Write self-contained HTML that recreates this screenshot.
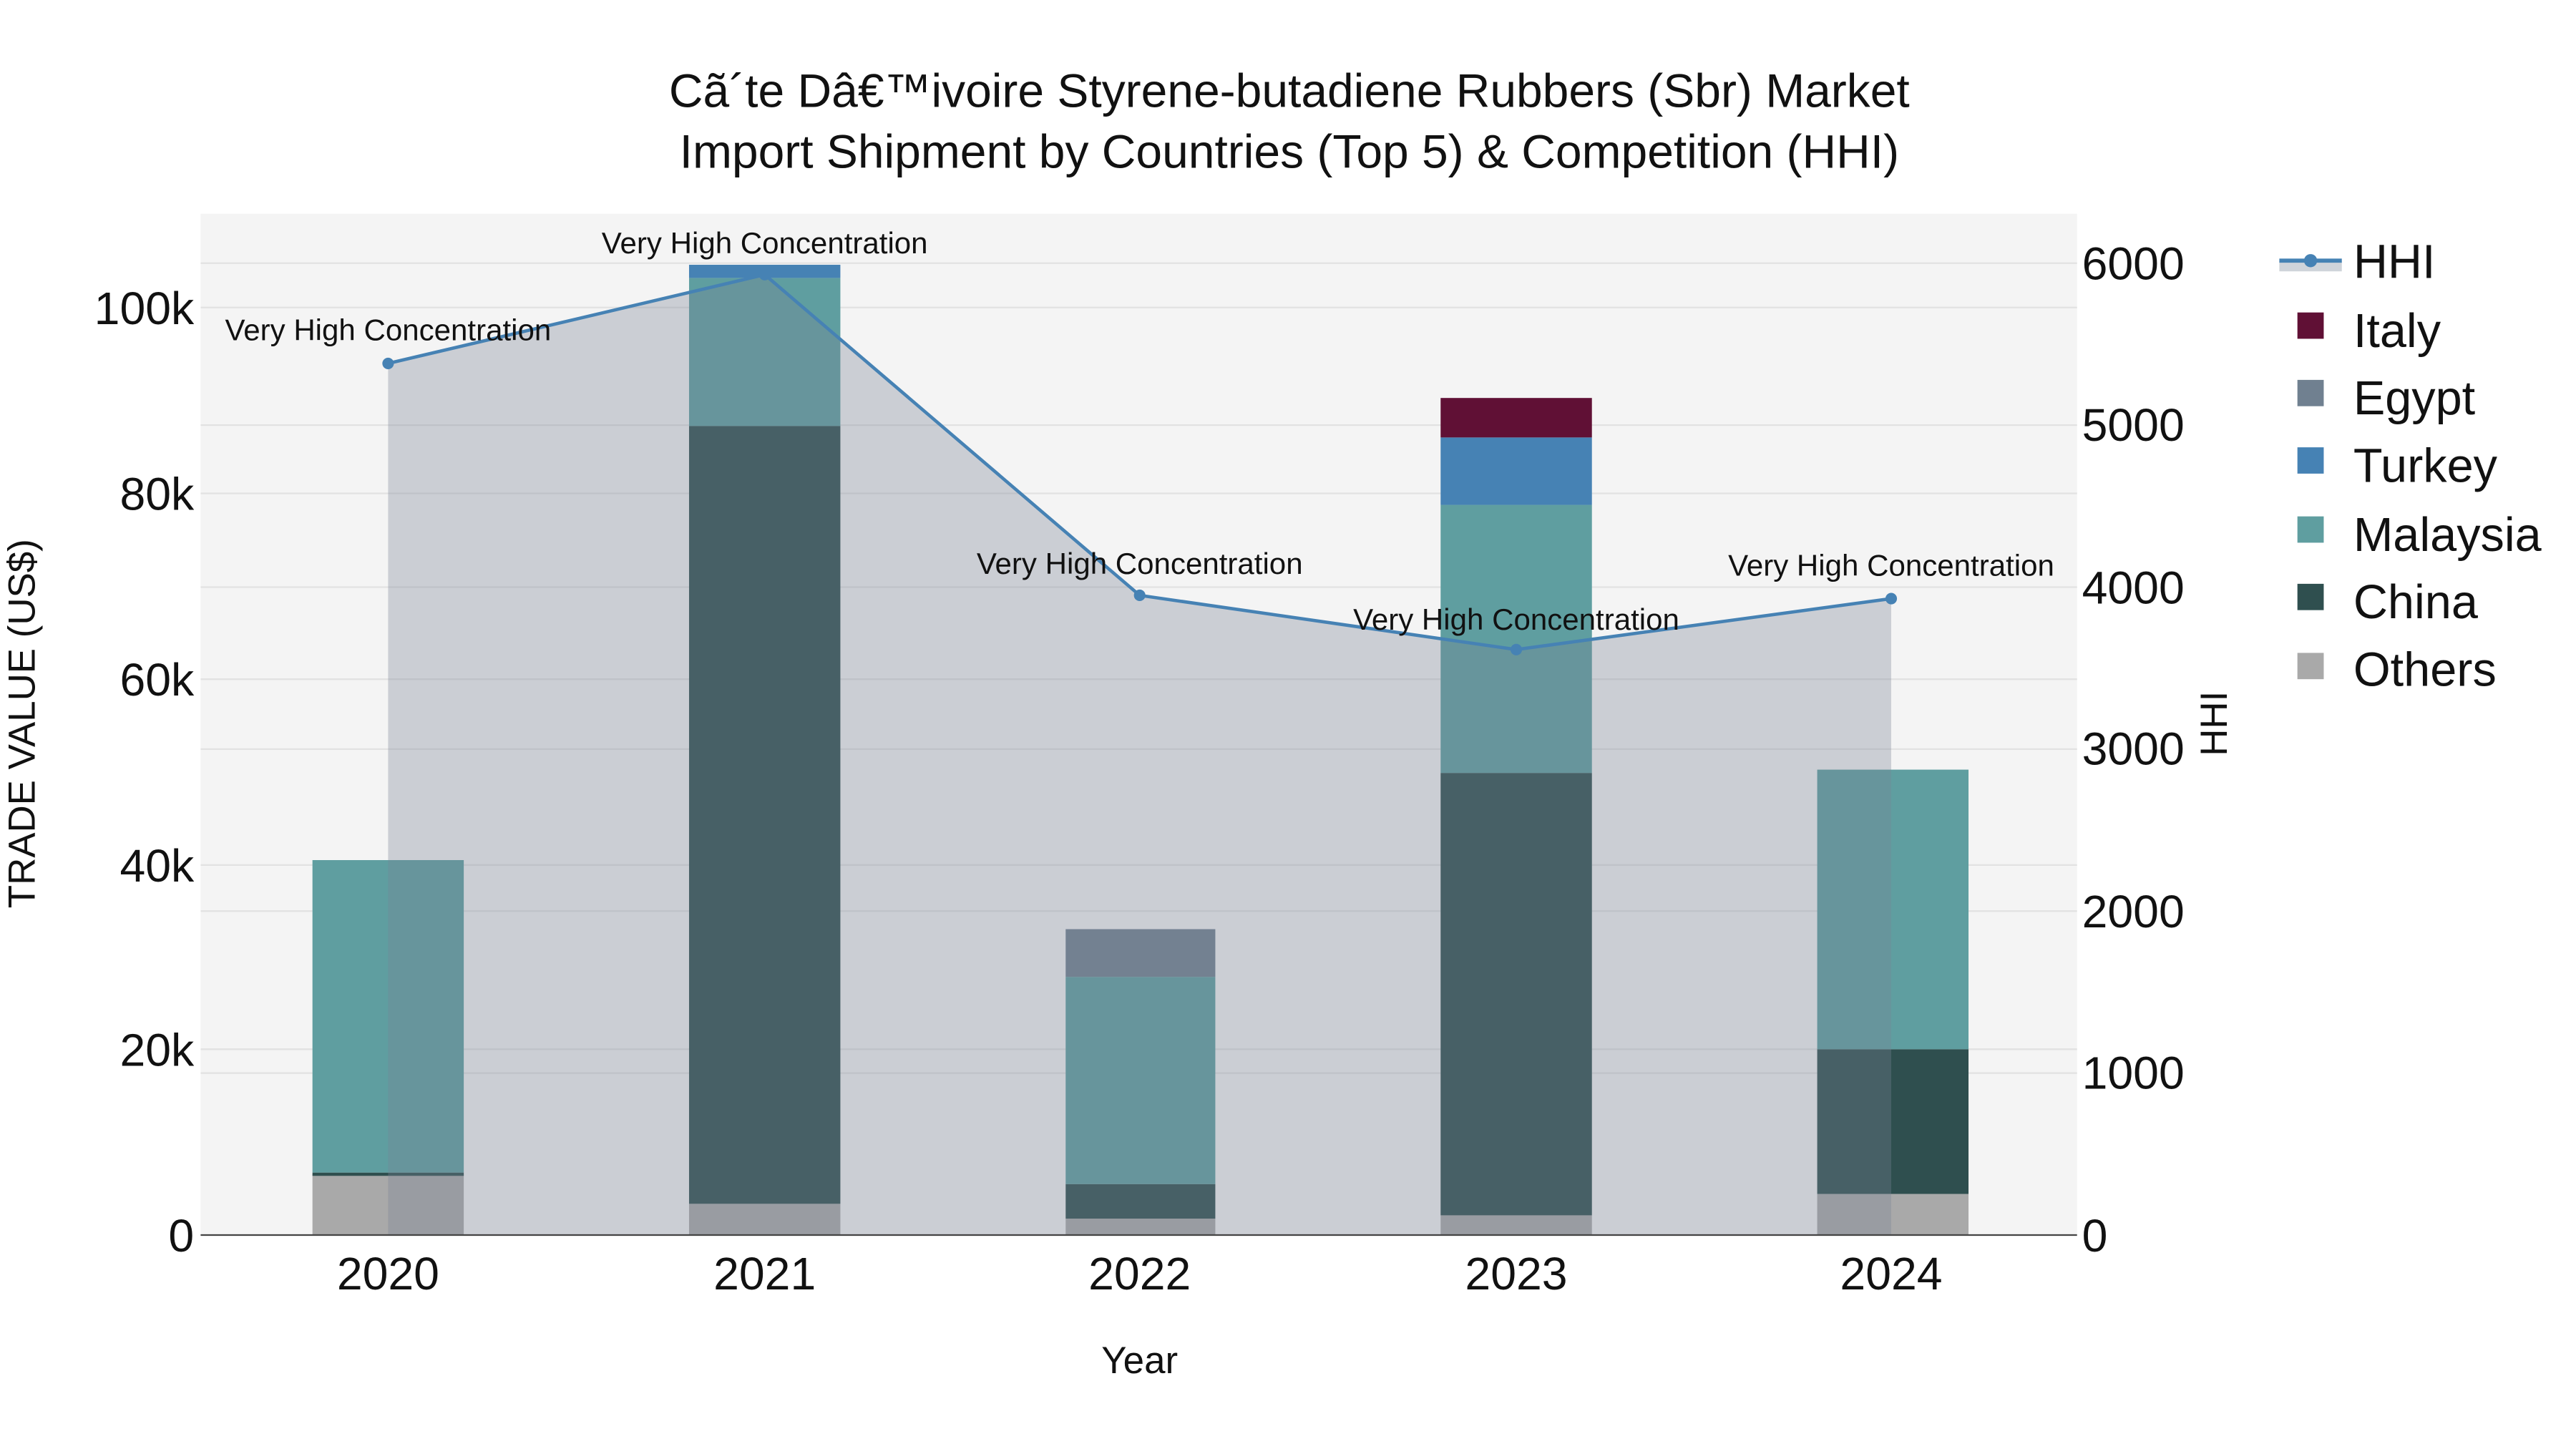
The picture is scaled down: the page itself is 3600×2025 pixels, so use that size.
<!DOCTYPE html>
<html><head><meta charset="utf-8"><style>html,body{margin:0;padding:0;background:#fff}svg{display:block}</style></head>
<body>
<svg width="3600" height="2025" viewBox="0 0 1566.4 881.1" xmlns="http://www.w3.org/2000/svg" font-family="Liberation Sans, sans-serif">
<rect x="0" y="0" width="1570" height="885" fill="#fff"/>
<rect x="122" y="130" width="1141" height="621" fill="#f4f4f4"/>
<g stroke="#e2e2e2" stroke-width="1">
<line x1="122" x2="1263" y1="638" y2="638"/><line x1="122" x2="1263" y1="526" y2="526"/><line x1="122" x2="1263" y1="413" y2="413"/><line x1="122" x2="1263" y1="300" y2="300"/><line x1="122" x2="1263" y1="187" y2="187"/>
<line x1="122" x2="1263" y1="652.5" y2="652.5"/><line x1="122" x2="1263" y1="554" y2="554"/><line x1="122" x2="1263" y1="455.5" y2="455.5"/><line x1="122" x2="1263" y1="357" y2="357"/><line x1="122" x2="1263" y1="258.5" y2="258.5"/><line x1="122" x2="1263" y1="160" y2="160"/>
</g>
<g>
<rect x="190" y="714" width="92" height="37" fill="#a9a9a9"/>
<rect x="190" y="713" width="92" height="2" fill="#2f4f4f"/>
<rect x="190" y="523" width="92" height="190" fill="#5f9ea0"/>

<rect x="419" y="732" width="92" height="19" fill="#a9a9a9"/>
<rect x="419" y="259" width="92" height="473" fill="#2f4f4f"/>
<rect x="419" y="169" width="92" height="90" fill="#5f9ea0"/>
<rect x="419" y="161" width="92" height="8" fill="#4682b4"/>

<rect x="648" y="741" width="91" height="10" fill="#a9a9a9"/>
<rect x="648" y="720" width="91" height="21" fill="#2f4f4f"/>
<rect x="648" y="594" width="91" height="126" fill="#5f9ea0"/>
<rect x="648" y="565" width="91" height="29" fill="#708090"/>

<rect x="876" y="739" width="92" height="12" fill="#a9a9a9"/>
<rect x="876" y="470" width="92" height="269" fill="#2f4f4f"/>
<rect x="876" y="307" width="92" height="163" fill="#5f9ea0"/>
<rect x="876" y="266" width="92" height="41" fill="#4682b4"/>
<rect x="876" y="242" width="92" height="24" fill="#601035"/>

<rect x="1105" y="726" width="92" height="25" fill="#a9a9a9"/>
<rect x="1105" y="638" width="92" height="88" fill="#2f4f4f"/>
<rect x="1105" y="468" width="92" height="170" fill="#5f9ea0"/>
</g>
<polygon points="236,751 236,221 465,167 693,362 922,395 1150,364 1150,751" fill="rgb(120,130,150)" fill-opacity="0.33"/>
<polyline points="236,221 465,167 693,362 922,395 1150,364" fill="none" stroke="#4682b4" stroke-width="2"/>
<g fill="#4682b4"><circle cx="236" cy="221" r="3.5"/><circle cx="465" cy="167" r="3.5"/><circle cx="693" cy="362" r="3.5"/><circle cx="922" cy="395" r="3.5"/><circle cx="1150" cy="364" r="3.5"/></g>
<line x1="122" x2="1263" y1="751" y2="751" stroke="#444" stroke-width="1"/>
<g font-size="18.3" text-anchor="middle" fill="#111">
<text x="236" y="207">Very High Concentration</text>
<text x="465" y="154">Very High Concentration</text>
<text x="693" y="349">Very High Concentration</text>
<text x="922" y="383">Very High Concentration</text>
<text x="1150" y="350">Very High Concentration</text>
</g>
<g font-size="28" text-anchor="end" fill="#111">
<text x="118" y="761">0</text><text x="118" y="648">20k</text><text x="118" y="536">40k</text><text x="118" y="423">60k</text><text x="118" y="310">80k</text><text x="118" y="197">100k</text>
</g>
<g font-size="28" text-anchor="start" fill="#111">
<text x="1266" y="761">0</text><text x="1266" y="662">1000</text><text x="1266" y="564">2000</text><text x="1266" y="465">3000</text><text x="1266" y="367">4000</text><text x="1266" y="268">5000</text><text x="1266" y="170">6000</text>
</g>
<g font-size="28" text-anchor="middle" fill="#111">
<text x="236" y="784">2020</text><text x="465" y="784">2021</text><text x="693" y="784">2022</text><text x="922" y="784">2023</text><text x="1150" y="784">2024</text>
</g>
<text x="693" y="835" font-size="23" text-anchor="middle" fill="#111">Year</text>
<text transform="translate(21,440) rotate(-90)" font-size="23" text-anchor="middle" fill="#111">TRADE VALUE (US$)</text>
<text transform="translate(1354,440) rotate(-90)" font-size="23" text-anchor="middle" fill="#111">HHI</text>
<g font-size="28.7" text-anchor="middle" fill="#111">
<text x="784" y="65">Cã´te Dâ€™ivoire Styrene-butadiene Rubbers (Sbr) Market</text>
<text x="784" y="102">Import Shipment by Countries (Top 5) &amp; Competition (HHI)</text>
</g>
<rect x="1386" y="159" width="38" height="6" fill="#cfd4da"/>
<line x1="1386" x2="1424" y1="158.5" y2="158.5" stroke="#4682b4" stroke-width="2.5"/>
<circle cx="1405" cy="158.5" r="4" fill="#4682b4"/>
<rect x="1397" y="190" width="16" height="16" fill="#601035"/>
<rect x="1397" y="231" width="16" height="16" fill="#708090"/>
<rect x="1397" y="272" width="16" height="16" fill="#4682b4"/>
<rect x="1397" y="314" width="16" height="16" fill="#5f9ea0"/>
<rect x="1397" y="355" width="16" height="16" fill="#2f4f4f"/>
<rect x="1397" y="397" width="16" height="16" fill="#a9a9a9"/>
<g font-size="29" fill="#111">
<text x="1431" y="169">HHI</text><text x="1431" y="211">Italy</text><text x="1431" y="252">Egypt</text><text x="1431" y="293">Turkey</text><text x="1431" y="335">Malaysia</text><text x="1431" y="376">China</text><text x="1431" y="417">Others</text>
</g>
</svg>
</body></html>
